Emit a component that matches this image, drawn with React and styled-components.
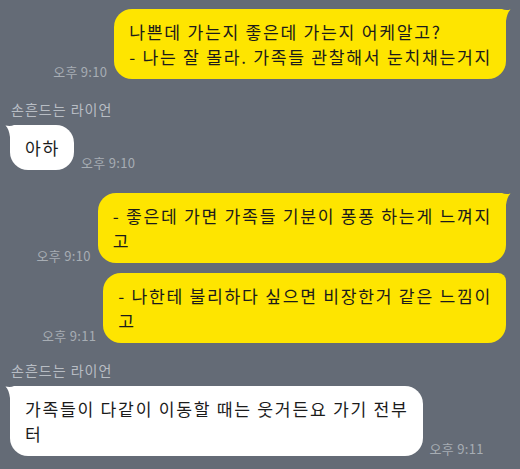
import React from 'react';
import styled, { createGlobalStyle } from 'styled-components';

const GlobalStyle = createGlobalStyle`
  html, body {
    margin: 0;
    padding: 0;
    background: #646b76;
  }
  body {
    font-family: "Noto Sans CJK KR", "Noto Sans", sans-serif;
  }
`;

const Chat = styled.div`
  width: 520px;
  height: 469px;
  box-sizing: border-box;
  padding: 9px 14px 0 10px;
  display: flex;
  flex-direction: column;
  overflow: hidden;
`;

const Group = styled.div`
  display: flex;
  flex-direction: column;
  gap: 10px;
  margin-top: ${({ $space }) => $space || 0}px;
`;

const Name = styled.div`
  font-size: 14px;
  line-height: 20px;
  letter-spacing: 1px;
  color: #b8bdc4;
  padding-left: 1px;
  margin-bottom: -4px;
`;

const Row = styled.div`
  display: flex;
  flex-direction: ${({ $mine }) => ($mine ? 'row-reverse' : 'row')};
  align-items: flex-end;
  gap: 7px;
`;

const Bubble = styled.div`
  position: relative;
  background: ${({ $mine }) => ($mine ? '#fee500' : '#ffffff')};
  color: #1b1b1b;
  font-size: 17.2px;
  line-height: 25px;
  letter-spacing: 1.7px;
  padding: 10px 14px 10px 15px;
  border-radius: 18px;
  border-top-right-radius: ${({ $mine }) => ($mine ? '8px' : '18px')};
  border-top-left-radius: ${({ $mine }) => ($mine ? '18px' : '8px')};
  white-space: pre-line;
`;

const Tail = styled.svg`
  position: absolute;
  top: 0;
  width: 14px;
  height: 18px;
  ${({ $mine }) => ($mine ? 'right: -5px;' : 'left: -5px; transform: scaleX(-1);')}
`;

const Time = styled.span`
  font-size: 13px;
  line-height: 14px;
  letter-spacing: 0.3px;
  color: #a7adb4;
  white-space: nowrap;
`;

const groups = [
  {
    mine: true,
    messages: [
      { text: '나쁜데 가는지 좋은데 가는지 어케알고?\n- 나는 잘 몰라. 가족들 관찰해서 눈치채는거지', time: '오후 9:10' },
    ],
  },
  {
    name: '손흔드는 라이언',
    space: 20,
    messages: [{ text: '아하', time: '오후 9:10' }],
  },
  {
    mine: true,
    space: 23,
    messages: [
      { text: '- 좋은데 가면 가족들 기분이 퐁퐁 하는게 느껴지\n고', time: '오후 9:10' },
      { text: '- 나한테 불리하다 싶으면 비장한거 같은 느낌이\n고', time: '오후 9:11' },
    ],
  },
  {
    name: '손흔드는 라이언',
    space: 17,
    messages: [{ text: '가족들이 다같이 이동할 때는 웃거든요 가기 전부\n터', time: '오후 9:11' }],
  },
];

const BubbleTail = ({ mine, color }) => (
  <Tail $mine={mine} viewBox="0 0 14 18">
    <path d="M0 0 L5 0 Q8 1.6 13.5 0.6 Q10 4 9 12 L9 18 L0 18 Z" fill={color} />
  </Tail>
);

export default function App() {
  return (
    <>
      <GlobalStyle />
      <Chat>
        {groups.map((g, gi) => (
          <Group key={gi} $space={g.space}>
            {g.name && <Name>{g.name}</Name>}
            {g.messages.map((m, mi) => (
              <Row key={mi} $mine={g.mine}>
                <Bubble $mine={g.mine}>
                  {mi === 0 && <BubbleTail mine={g.mine} color={g.mine ? '#fee500' : '#ffffff'} />}
                  {m.text}
                </Bubble>
                <Time>{m.time}</Time>
              </Row>
            ))}
          </Group>
        ))}
      </Chat>
    </>
  );
}
